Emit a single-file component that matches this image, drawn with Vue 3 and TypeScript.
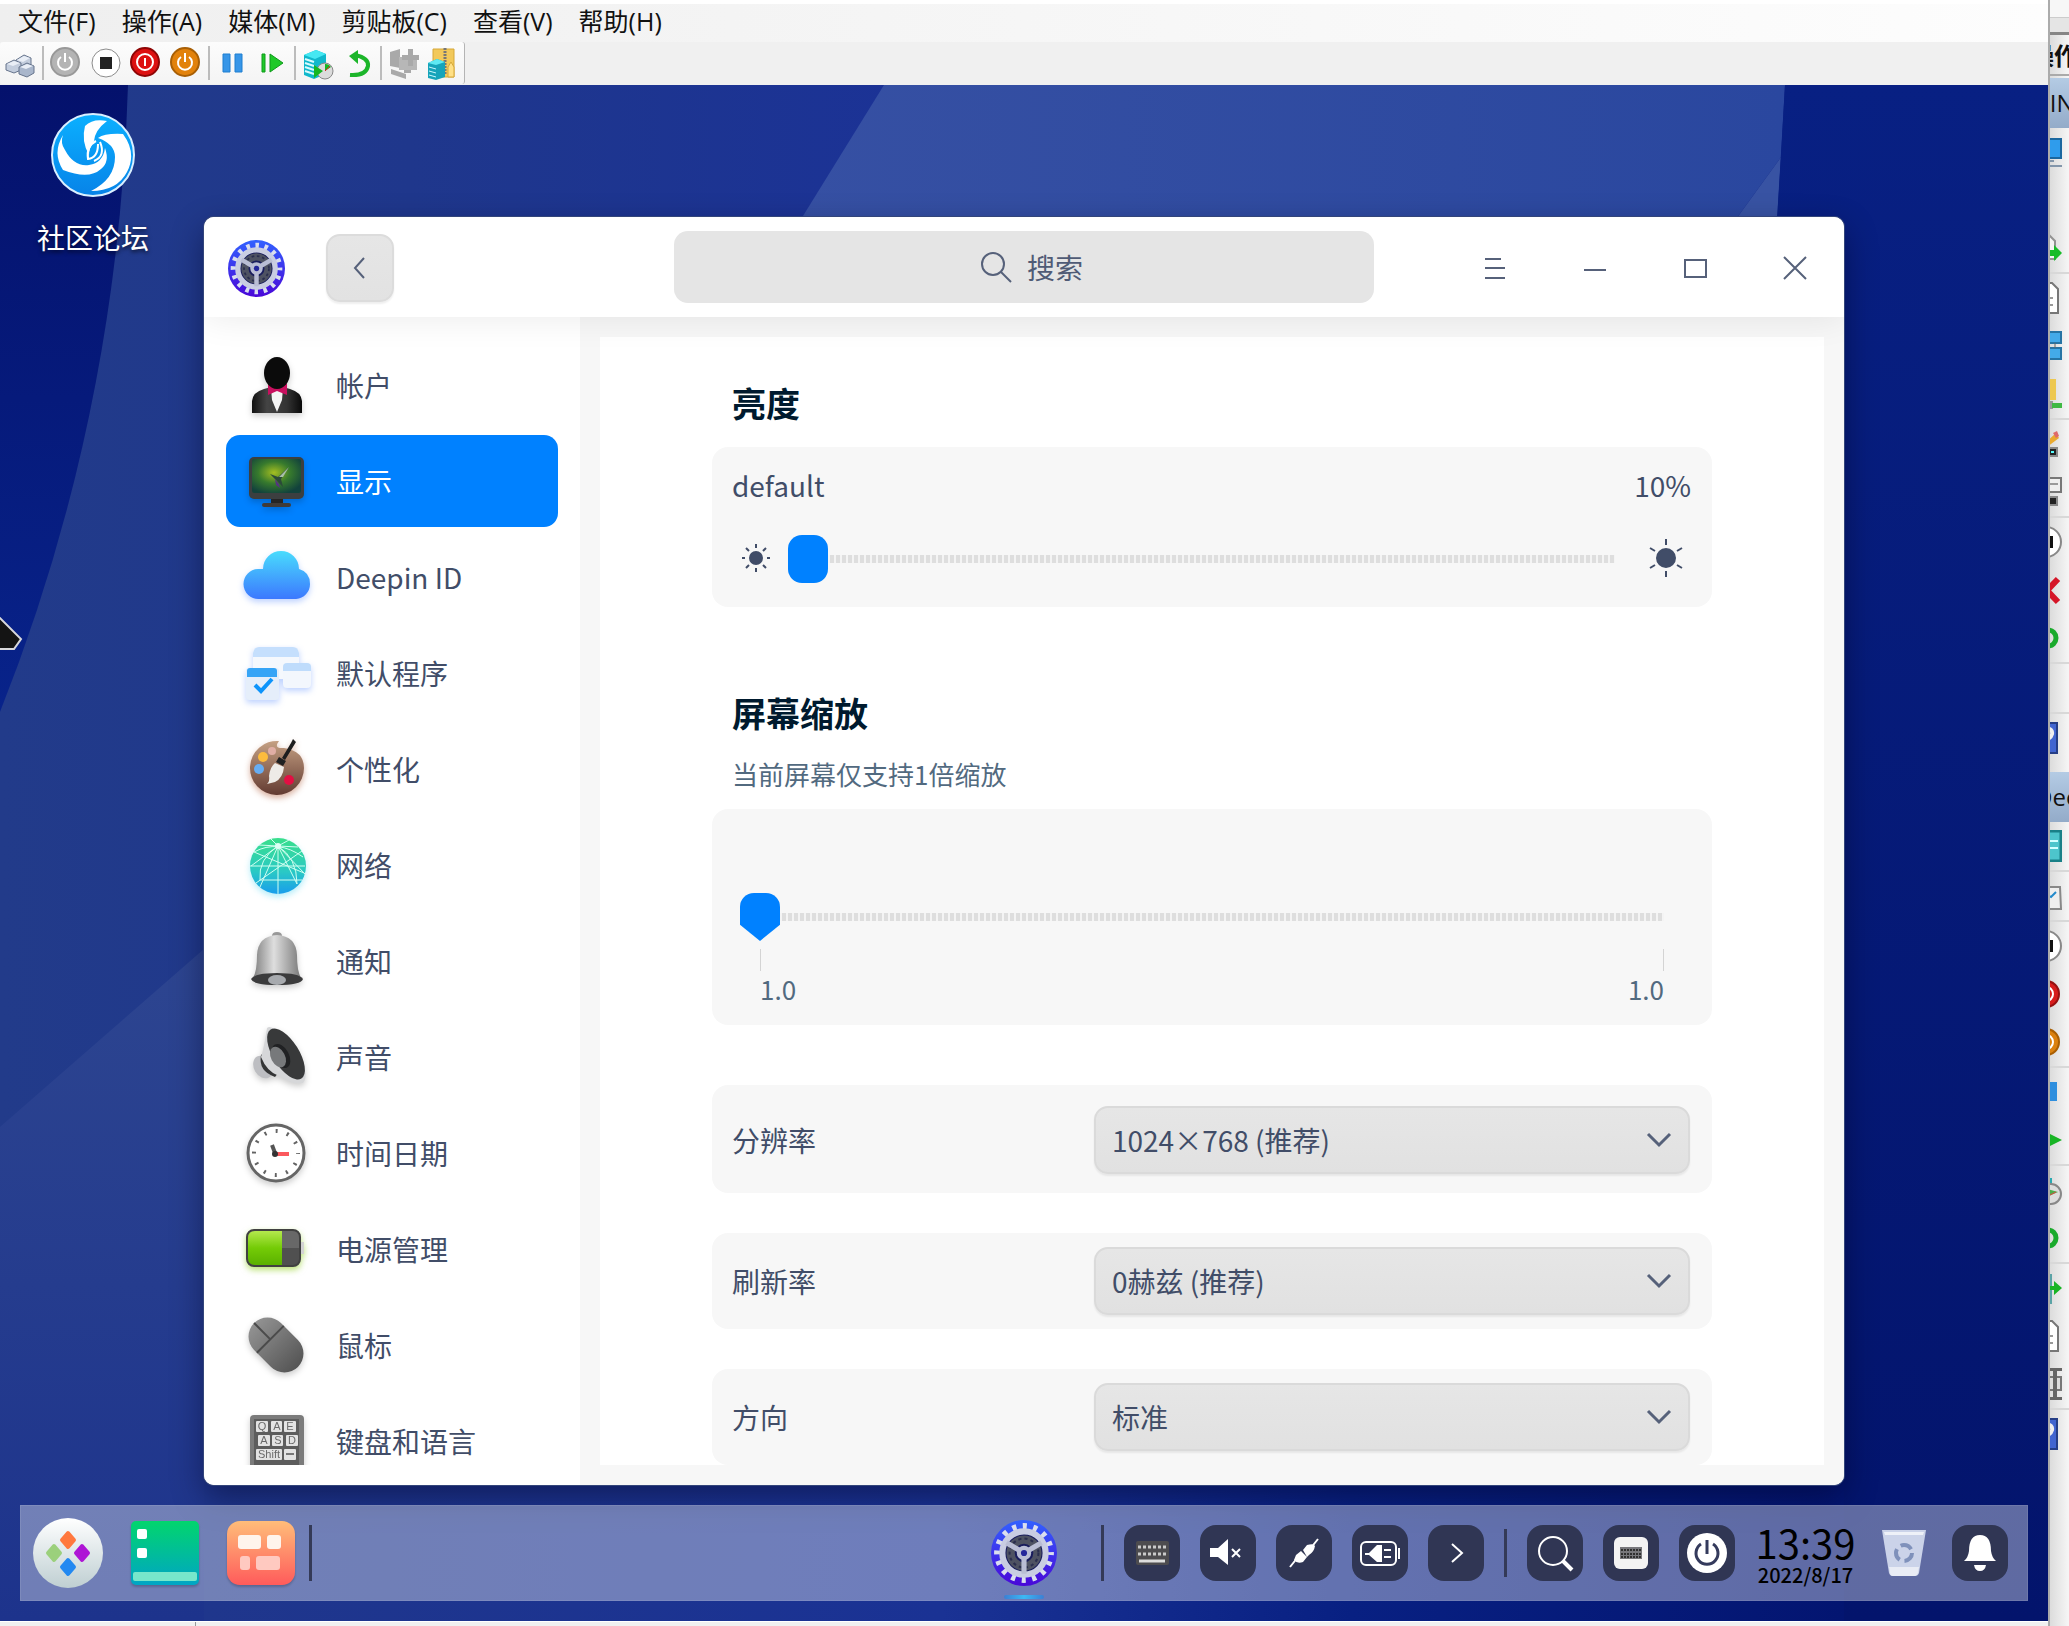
<script setup lang="ts">
import { ref } from 'vue'

interface NavItem { id: string; label: string; icon: string }
interface Option { id: string; label: string; choices: string[]; tall?: boolean }

const menus = ['文件(F)', '操作(A)', '媒体(M)', '剪贴板(C)', '查看(V)', '帮助(H)']

const toolGroups: { name: string; art: string }[][] = [
  [{
    name: '键盘',
    art: `<g stroke="#66748c" stroke-width="1" fill="#c3cddd"><path d="M16 17l8-5 7 3v7l-7 4-8-3z"/><path d="M6 21l8-4 7 3v7l-7 3-8-3z"/><path d="M19 24l8-4 7 3v7l-7 4-8-3z" fill="#a9b6cb"/></g><path d="M17 17l7-4 6 2-7 4zM7 21l7-3 6 2-7 3zM20 24l7-3 6 2-7 3z" fill="#e9eef6"/>`,
  }],
  [
    { name: '启动', art: `<circle cx="19" cy="19" r="14" fill="#b4b4b4" stroke="#989898" stroke-width="2"/><path d="M15 14a7 7 0 1 0 8 0M19 10v9" fill="none" stroke="#fff" stroke-width="2"/>` },
    { name: '停止', art: `<circle cx="20" cy="20" r="14" fill="#fff" stroke="#8c8c8c" stroke-width="1"/><rect x="14" y="14" width="12" height="12" fill="#222"/>` },
    { name: '关闭', art: `<circle cx="19" cy="19" r="14" fill="#dd1111" stroke="#8e0505" stroke-width="2"/><circle cx="19" cy="19" r="8" fill="none" stroke="#fff" stroke-width="2"/><path d="M19 15v8" stroke="#fff" stroke-width="2"/>` },
    { name: '保存', art: `<circle cx="19" cy="19" r="14" fill="#e2820b" stroke="#a85f05" stroke-width="2"/><path d="M15 14a7 7 0 1 0 8 0M19 10v9" fill="none" stroke="#fff" stroke-width="2"/>` },
  ],
  [
    { name: '暂停', art: `<path d="M11 11h7v18h-7zM23 11h7v18h-7z" fill="#3796e8" stroke="#1f7fd0"/>` },
    { name: '重置', art: `<path d="M10 11h3v18h-3zM18 11l13 9-13 9z" fill="#1fc929" stroke="#0f9a1a"/>` },
  ],
  [
    { name: '检查点', art: `<path d="M6 12l12-5 10 4v20l-12 5-10-4z" fill="#10b8cc"/><path d="M6 12l12-5 10 4-11 5z" fill="#45e8f2"/><path d="M7 16l9 3M7 20l9 3M7 24l9 3M7 28l9 3" stroke="#d8fbff" stroke-width="2"/><circle cx="27" cy="28" r="8" fill="#dcdcdc" stroke="#888"/><path d="M27 28v-7a7 7 0 0 1 6 3zM16 22l9 6-9 7z" fill="#16b722"/><path d="M27 28l5-5" stroke="#d22" stroke-width="1"/>` },
    { name: '还原', art: `<path d="M17 12q14 3 13 11-2 10-18 9" fill="none" stroke="#1cb52a" stroke-width="4"/><path d="M20 7v14l-9-8z" fill="#1cb52a"/>` },
  ],
  [
    { name: '增强会话', art: `<g fill="#a9a9a9"><path d="M6 9l10-3v19l-10-2z"/><path d="M15 14h18v13H15z" fill="#b7b7b7"/><path d="M24 6h5v6h6v5h-6v6h-5v-6h-6v-5h6z"/><path d="M20 27h7v3h-7zM7 26l15 5v5L7 31z"/></g>` },
    { name: '共享', art: `<path d="M9 6h21v28H9z" fill="#f2c95b" stroke="#d6a838"/><path d="M27 19l3 5v10h-6V24z" fill="#ffe086" stroke="#d6a838"/><path d="M21 5v26" stroke="#777" stroke-width="3" stroke-dasharray="2 1"/><path d="M4 20l9-4 8 3v15l-9 3-8-2z" fill="#16a4ba"/><path d="M4 20l9-4 8 3-9 3z" fill="#5ee9f3"/><path d="M5 24l7 2M5 28l7 2M5 32l7 2" stroke="#c8f8ff"/>` },
  ],
]

const nav: NavItem[] = [
  { id: 'account', label: '帐户', icon: `<path d="M11 64V52q1-9 12-12l7-2h12l7 2q11 3 12 12v12z" fill="url(#suit)"/><path d="M30 39h12l-1 12-5 12-5-12z" fill="#f4f4f4"/><path d="M27 34l9 5 10-5v12l-10-4-9 4z" fill="#c9105f"/><ellipse cx="36" cy="24" rx="13" ry="16" fill="#0b0b0b"/>` },
  { id: 'display', label: '显示', icon: `<path d="M30 53h12v6H30z" fill="#252525"/><rect x="21" y="58" width="29" height="4" rx="2" fill="#403b38"/><rect x="8" y="12" width="55" height="42" rx="5" fill="#3c3f40"/><rect x="11" y="14" width="49" height="34" rx="2" fill="url(#screen)"/><path d="M29 29l8 3 11-10-8 12 2 8-6-6z" fill="#2b4a39"/><path d="M38 32l10-10-6 10z" fill="#a9bfa6"/><path d="M34 34l4 5 1 4-4-3z" fill="#563480"/>` },
  { id: 'deepin-id', label: 'Deepin ID', icon: `<path d="M18 58a15 15 0 0 1-1-30h5a18 18 0 0 1 36 0q11 3 11 15a15 15 0 0 1-14 15z" fill="url(#cloud)"/>` },
  { id: 'default-apps', label: '默认程序', icon: `<rect x="12" y="10" width="46" height="32" rx="4" fill="#f5f8fd"/><path d="M12 20v-4q1-6 6-6h34q5 0 6 6v4z" fill="#c5dffd"/><rect x="42" y="26" width="28" height="25" rx="4" fill="#f3f7fd"/><path d="M42 34v-4q0-4 4-4h20q4 0 4 4v4z" fill="#bfdcfc"/><rect x="5" y="31" width="33" height="32" rx="3" fill="#e5eefa"/><path d="M6 40v-6q0-3 3-3h24q3 0 3 3v6z" fill="#36a4f6"/><path d="M14 48l6 6 11-12" fill="none" stroke="#0d94fb" stroke-width="4"/>` },
  { id: 'personalization', label: '个性化', icon: `<path d="M38 8q-6 8 5 7 20 3 20 20a27 27 0 1 1-25-27z" fill="url(#wood)"/><circle cx="22" cy="24" r="5" fill="#fdbc3d"/><circle cx="31" cy="18" r="4" fill="#e0aea5"/><circle cx="18" cy="36" r="5" fill="#67adf3"/><circle cx="48" cy="47" r="5" fill="#e30f43"/><path d="M41 25l9-15 2-4 3 3-11 18z" fill="#1c1d1e"/><path d="M35 29l3-5 7 4-3 5z" fill="#202122"/><path d="M34 30l9 4q-1 11-9 15l-8 2q3-3 2-8 1-9 6-13z" fill="#eeebe7"/>` },
  { id: 'network', label: '网络', icon: `<circle cx="37" cy="37" r="28" fill="url(#globe)"/><g fill="none" stroke="#cffff0" stroke-width="1"><path d="M37 17L19 58M37 17L56 55M37 17L10 37M37 17l27 28M37 17v48M9 37h55M13 23l50 21M61 22L15 54M37 17L18 16M37 17l20 1M19 51h42M30 10l7 7 11-6"/><path d="M37 17q19 12 19 38M37 17Q17 30 19 51M13 23q24-13 49 5"/></g><circle cx="37" cy="17" r="3" fill="#dffff6"/>` },
  { id: 'notification', label: '通知', icon: `<path d="M31 11q0-4 5-4t5 4v3H31z" fill="#989898"/><path d="M16 30q1-19 20-20 19 1 20 20 0 16 4 23 3 6-24 6T12 53q-3 6 0 0 4-7 4-23z" fill="url(#steel)"/><path d="M10 54q4-6 26-6t26 6q-2 6-26 6T10 54z" fill="#3b3b3c"/><ellipse cx="36" cy="55" rx="9" ry="5" fill="#a7aaae"/>` },
  { id: 'sound', label: '声音', icon: `<g transform="translate(0 2)"><ellipse cx="22" cy="44" rx="9" ry="12" transform="rotate(-30 22 44)" fill="#bdbec2"/><path d="M20 32q-3 16 14 22l4-5-12-22z" fill="#343536"/><path d="M26 5q-3 20-6 29 6 15 18 19 14 9 24 7 7-8-5-28T34 7q-5-5-8-2z" fill="#d6d7d9"/><ellipse cx="45" cy="31" rx="13" ry="29" transform="rotate(-32 45 31)" fill="#38393a"/><ellipse cx="40" cy="33" rx="8" ry="13" transform="rotate(-28 40 33)" fill="#202123"/><ellipse cx="37" cy="34" rx="7" ry="11" transform="rotate(-28 37 34)" fill="#77797b"/></g>` },
  { id: 'datetime', label: '时间日期', icon: `<circle cx="35" cy="36" r="28" fill="#fff" stroke="#656565" stroke-width="3"/><circle cx="35" cy="36" r="22" fill="none" stroke="#636363" stroke-width="4" stroke-dasharray="2 9.519" stroke-dashoffset="1"/><path d="M34 36l-3-8" stroke="#555" stroke-width="4"/><path d="M35 37h13" stroke="#fb595d" stroke-width="4"/><circle cx="34" cy="37" r="3" fill="#333"/>` },
  { id: 'power', label: '电源管理', icon: `<path d="M58 29h5v12h-5z" fill="#d3d3d3"/><rect x="6" y="17" width="53" height="36" rx="7" fill="#505050" stroke="#414141" stroke-width="2"/><path d="M41 18h10q7 0 7 7v10H41z" fill="#686868"/><path d="M14 18h27v34H14q-7 0-7-7V25q0-7 7-7z" fill="url(#charge)"/>` },
  { id: 'mouse', label: '鼠标', icon: `<g transform="rotate(-45 35 36)"><rect x="16" y="5" width="38" height="62" rx="19" fill="url(#grey)"/><path d="M16 28h38M35 5v23" stroke="#4b4b4b" stroke-width="2"/></g>` },
  { id: 'keyboard', label: '键盘和语言', icon: `<rect x="9" y="10" width="54" height="58" rx="4" fill="#7b7b7b"/><path d="M13 14h45v47H13z" fill="#5d5d5d"/><g fill="#e3e3e3"><rect x="15" y="16" width="12" height="11" rx="1"/><rect x="30" y="16" width="11" height="11" rx="1"/><rect x="43" y="16" width="12" height="11" rx="1"/><rect x="17" y="30" width="12" height="11" rx="1"/><rect x="31" y="30" width="11" height="11" rx="1"/><rect x="45" y="30" width="12" height="11" rx="1"/><rect x="15" y="44" width="26" height="11" rx="1"/><rect x="43" y="44" width="12" height="11" rx="1"/></g><g fill="#6a6a6a" font-family="Liberation Sans, sans-serif" font-size="11" text-anchor="middle"><text x="21" y="25">Q</text><text x="36" y="25">A</text><text x="49" y="25">E</text><text x="23" y="39">A</text><text x="37" y="39">S</text><text x="51" y="39">D</text><text x="28" y="53">Shift</text></g><path d="M45 49h8" stroke="#777" stroke-width="2"/>` },
]

const current = ref('display')
const brightness = ref(10)
const scale = ref(1)
const query = ref('')

const options: Option[] = [
  { id: 'resolution', label: '分辨率', choices: ['1024×768 (推荐)'], tall: true },
  { id: 'refresh', label: '刷新率', choices: ['0赫兹 (推荐)'] },
  { id: 'direction', label: '方向', choices: ['标准'] },
]

const tray: { name: string; art: string }[] = [
  { name: '键盘', art: `<rect x="12" y="16" width="33" height="24" rx="2" fill="#4d4c4f"/><path d="M14 22h29M14 29h29" stroke="#c9c9c9" stroke-width="3" stroke-dasharray="3 2"/><path d="M15 36h26" stroke="#ddd" stroke-width="3"/>` },
  { name: '静音', art: `<path d="M10 23h8l10-9v26l-10-8h-8z" fill="#fff"/><path d="M32 24l8 8M40 24l-8 8" stroke="#fff" stroke-width="2"/>` },
  { name: '网络', art: `<path d="M14 42l8-10M42 14l-8 10" stroke="#fff" stroke-width="2"/><path d="M20 30l5-4 6 6-4 5q-6 2-9-2zM27 25l4-5q7-2 8 1-1 6-6 9l-2 2z" fill="#fff"/>` },
  { name: '电源', art: `<rect x="9" y="17" width="35" height="23" rx="5" fill="none" stroke="#fff" stroke-width="2"/><path d="M47 23v11" stroke="#fff" stroke-width="2"/><path d="M13 28h4l8-8h5v17h-5l-8-7h-4z" fill="#fff"/><path d="M32 25h7M32 32h7" stroke="#fff" stroke-width="2"/>` },
  { name: '展开', art: `<path d="M24 19l10 9-10 9" fill="none" stroke="#fff" stroke-width="2"/>` },
]
const quick: { name: string; art: string }[] = [
  { name: '搜索', art: `<circle cx="26" cy="26" r="14" fill="none" stroke="#fff" stroke-width="2"/><path d="M36 36l9 9" stroke="#fff" stroke-width="4"/>` },
  { name: '屏幕键盘', art: `<rect x="11" y="12" width="34" height="32" rx="6" fill="#f3f3f3"/><path d="M17 22h22v12H17z" fill="#77777b"/><path d="M18 25h20M18 29h20M18 32h20" stroke="#303030" stroke-width="2" stroke-dasharray="2 1"/>` },
  { name: '关机', art: `<circle cx="28" cy="28" r="20" fill="#fff"/><path d="M22 19a11 11 0 1 0 12 0M28 15v14" fill="none" stroke="#343a5c" stroke-width="3"/>` },
]

const art: Record<string, string> = {
  none: '',
  monitor: `<path d="M0 3h31v19H0z" fill="#2f9cec" stroke="#1a679f" stroke-width="2"/><path d="M4 25h20M0 30h32" stroke="#8396ab" stroke-width="2"/>`,
  exportDoc: `<path d="M2 3h17l6 6v18H2z" fill="#f4f4f4" stroke="#929292" stroke-width="2"/><path d="M10 18h14v-5l8 8-8 8v-5H10z" fill="#17bc28"/>`,
  doc: `<path d="M4 1h18l6 6v24H4z" fill="#fff" stroke="#777" stroke-width="2"/><path d="M8 16h15M8 23h15" stroke="#999" stroke-width="2"/>`,
  screens: `<path d="M10 2h21v11H10zM10 18h21v11H10z" fill="#43aae9" stroke="#2674a4" stroke-width="2"/><path d="M25 13v5" stroke="#666"/>`,
  folder: `<path d="M2 1h24v21H2z" fill="#edc850"/><path d="M12 23h11v8H12z" fill="#999"/><path d="M22 25h10v5H22z" fill="#40b943"/>`,
  pencil: `<path d="M0 19h28v10H0z" fill="#888"/><path d="M3 21h23v6H3z" fill="#222"/><path d="M12 18L26 5l3 5-12 9z" fill="#e9aa30"/><path d="M23 5l4-2 2 5-3 2z" fill="#df6a6a"/><path d="M21 24h3" stroke="#5ff" stroke-width="2"/>`,
  printer: `<path d="M2 2h29v14H2z" fill="#eee" stroke="#777" stroke-width="2"/><path d="M8 8h20" stroke="#999" stroke-width="2"/><path d="M0 20h28v10H0z" fill="#888"/><path d="M3 22h23v6H3z" fill="#222"/>`,
  stop: `<circle cx="16" cy="16" r="15" fill="#fff" stroke="#888" stroke-width="2"/><path d="M10 10h13v12H10z" fill="#111"/>`,
  cross: `<path d="M6 5l22 23M28 5L6 28" stroke="#d51628" stroke-width="6"/>`,
  refresh: `<circle cx="18" cy="16" r="8" fill="none" stroke="#1aaa2c" stroke-width="5"/>`,
  help: `<path d="M0 1h27v30H0z" fill="#4165d0" stroke="#253e86" stroke-width="2"/><path d="M10 9q2-4 6-3 7 1 6 6-1 4-6 6v4" fill="none" stroke="#eee" stroke-width="4"/>`,
  server: `<path d="M1 1h30v30H1z" fill="#4dc5cc" stroke="#198087" stroke-width="3"/><path d="M4 11h24M4 18h24" stroke="#d2ffff" stroke-width="2"/>`,
  chart: `<path d="M6 7h24l1 22H6z" fill="#eee" stroke="#888" stroke-width="2"/><path d="M9 18l8-3 4 2 5-5" fill="none" stroke="#238acb" stroke-width="2"/>`,
  off: `<circle cx="16" cy="16" r="13" fill="#d71c1c" stroke="#951010" stroke-width="2"/><circle cx="16" cy="16" r="7" fill="none" stroke="#fff" stroke-width="2"/>`,
  save: `<circle cx="16" cy="16" r="13" fill="#db810f" stroke="#a85e02" stroke-width="2"/><circle cx="16" cy="16" r="7" fill="none" stroke="#fff" stroke-width="2"/>`,
  pause: `<path d="M4 6h8v19H4zM17 6h10v19H17z" fill="#2e8ede"/>`,
  play: `<path d="M12 6l20 10-20 10z" fill="#18b425"/>`,
  snapshot: `<path d="M1 4h21v22H1z" fill="#2aa9b1"/><circle cx="21" cy="20" r="10" fill="#ddd" stroke="#888" stroke-width="2"/><path d="M10 13l18 5-9 4z" fill="#4bae4b"/><path d="M20 21l6-3" stroke="#d44"/>`,
  move: `<path d="M0 2h22v30H0z" fill="#5ba3a6"/><path d="M16 14h8V9l8 7-8 7v-5h-8z" fill="#18b425"/>`,
  rename: `<path d="M0 9h31v13H0z" fill="#ddd" stroke="#777" stroke-width="2"/><path d="M18 1h14M18 31h14M25 1v30" stroke="#666" stroke-width="4"/>`,
}
const hostActions = [['monitor', 'none', 'exportDoc'], ['doc', 'screens', 'folder'], ['pencil', 'printer'], ['stop', 'cross', 'refresh'], ['none'], ['help']]
const guestActions = [['server'], ['chart'], ['stop', 'off', 'save'], ['pause', 'play'], ['snapshot', 'refresh'], ['move', 'doc', 'rename'], ['help']]
</script>

<template>
  <div class="screen">
    <svg class="defs" aria-hidden="true">
      <defs>
        <linearGradient id="suit"><stop offset="0" stop-color="#111" /><stop offset=".3" stop-color="#444" /><stop offset=".7" stop-color="#333" /><stop offset="1" stop-color="#090909" /></linearGradient>
        <radialGradient id="screen" cx=".45" cy=".4" r=".65"><stop offset="0" stop-color="#a4be21" /><stop offset=".5" stop-color="#377a2d" /><stop offset="1" stop-color="#12423c" /></radialGradient>
        <linearGradient id="cloud" x2="0" y2="1"><stop offset="0" stop-color="#49dcfd" /><stop offset="1" stop-color="#3c78fe" /></linearGradient>
        <linearGradient id="wood" x2="0" y2="1"><stop offset="0" stop-color="#c5a083" /><stop offset="1" stop-color="#633b32" /></linearGradient>
        <linearGradient id="globe" x2="0" y2="1"><stop offset="0" stop-color="#39df8b" /><stop offset=".6" stop-color="#2ac9c5" /><stop offset="1" stop-color="#199dec" /></linearGradient>
        <linearGradient id="steel"><stop offset="0" stop-color="#777" /><stop offset=".45" stop-color="#dedede" /><stop offset="1" stop-color="#777" /></linearGradient>
        <linearGradient id="charge" x2="0" y2="1"><stop offset="0" stop-color="#b4e94e" /><stop offset=".5" stop-color="#74cb06" /><stop offset="1" stop-color="#5bb100" /></linearGradient>
        <linearGradient id="grey" x2="0" y2="1"><stop offset="0" stop-color="#929292" /><stop offset="1" stop-color="#555" /></linearGradient>
        <linearGradient id="gearBlue" x2="0" y2="1"><stop offset="0" stop-color="#3261ff" /><stop offset="1" stop-color="#4907d8" /></linearGradient>
        <linearGradient id="teal" x2="0" y2="1"><stop offset="0" stop-color="#02d56d" /><stop offset="1" stop-color="#00a5c5" /></linearGradient>
        <linearGradient id="coral" x2="0" y2="1"><stop offset="0" stop-color="#ffbd79" /><stop offset="1" stop-color="#ff5b5b" /></linearGradient>
        <linearGradient id="pearl" x2="0" y2="1"><stop offset="0" stop-color="#fff" /><stop offset="1" stop-color="#bfcfd2" /></linearGradient>
        <linearGradient id="swirl" x2="0" y2="1"><stop offset="0" stop-color="#0bb0ff" /><stop offset="1" stop-color="#0783e8" /></linearGradient>
        <symbol id="gear" viewBox="0 0 64 64">
          <circle cx="32" cy="32" r="32" fill="url(#gearBlue)" />
          <circle cx="32" cy="32" r="26" fill="none" stroke="#dadeef" stroke-width="6" stroke-dasharray="4 6.21" stroke-dashoffset="2" />
          <circle cx="32" cy="32" r="21" fill="#191d5c" stroke="#c9cde2" stroke-width="6" />
          <circle cx="32" cy="32" r="13" fill="none" stroke="#4e5262" stroke-width="8" />
          <circle cx="32" cy="32" r="14" fill="none" stroke="#2a2e4e" stroke-width="2" stroke-dasharray="3 3" />
          <path d="M32 32v20M32 32L15 22M32 32l17-10" stroke="#b9bdd4" stroke-width="5" />
          <circle cx="32" cy="32" r="7" fill="#b9bdd4" /><circle cx="32" cy="32" r="3" fill="#24269a" />
        </symbol>
      </defs>
    </svg>

    <section class="vm">
      <nav class="menubar" aria-label="菜单">
        <button v-for="m in menus" :key="m" type="button">{{ m }}</button>
      </nav>
      <div class="toolrow">
        <div class="toolbar">
          <div v-for="(group, g) in toolGroups" :key="g" class="tools">
            <button v-for="t in group" :key="t.name" type="button" :aria-label="t.name">
              <svg viewBox="0 0 40 40" v-html="t.art"></svg>
            </button>
          </div>
        </div>
      </div>

      <div class="desktop">
        <svg class="wallpaper" viewBox="0 0 2048 1536" preserveAspectRatio="none" aria-hidden="true">
          <defs>
            <linearGradient id="base" x2="1" y2="0"><stop offset="0" stop-color="#223b8a" /><stop offset=".2" stop-color="#1f378c" /><stop offset=".45" stop-color="#1b3296" /><stop offset=".8" stop-color="#0a2086" /><stop offset="1" stop-color="#061b7c" /></linearGradient>
            <linearGradient id="edge" x2="0" y2="1"><stop offset="0" stop-color="#04116c" /><stop offset="1" stop-color="#08238a" /></linearGradient>
            <linearGradient id="beam"><stop offset="0" stop-color="#3650a3" /><stop offset="1" stop-color="#2a479f" /></linearGradient>
            <linearGradient id="floor" x2="1" y2="0"><stop offset="0" stop-color="#1f368c" /><stop offset=".45" stop-color="#1a3294" /><stop offset=".7" stop-color="#082082" /><stop offset="1" stop-color="#031571" /></linearGradient>
            <linearGradient id="right" x2="0" y2="1"><stop offset="0" stop-color="#082083" /><stop offset="1" stop-color="#03146c" /></linearGradient>
            <linearGradient id="hill" x2="0" y2="1"><stop offset="0" stop-color="#2d4590" /><stop offset="1" stop-color="#1d338c" /></linearGradient>
          </defs>
          <path d="M0 0h2048v1536H0z" fill="url(#base)" />
          <path d="M0 0h128q-10 330-128 627z" fill="url(#edge)" />
          <path d="M884 0h901l-4 72-58 80H790z" fill="url(#beam)" />
          <path d="M1781 72l-5 80h-53z" fill="#3853a3" />
          <path d="M1785 0h263v1536h-288l16-1384z" fill="url(#right)" />
          <path d="M0 1042l204-178v672H0z" fill="url(#hill)" />
          <path d="M204 1390h1640v146H204z" fill="url(#floor)" />
        </svg>
        <svg class="pointer" viewBox="0 0 24 36" aria-hidden="true"><path d="M-12 4L0 2l21 21-7 10H-4z" fill="#141414" stroke="#d8d8dc" stroke-width="2" /></svg>
        <a class="shortcut" href="#forum">
          <svg viewBox="0 0 84 84">
            <circle cx="42" cy="42" r="41" fill="url(#swirl)" stroke="#d9efff" stroke-width="2" />
            <path d="M34 13q8-8 22-5-12 9-13 20-5 7-5 14-8-14-4-29z" fill="#fff" />
            <path d="M12 22q-3 8 2 15 9 17 24 15 14-2 16-17 5 14-4 21-12 11-38 1Q1 40 12 22z" fill="#fff" />
            <path d="M47 25q7-5 25-4 14 19 4 38-10 19-36 19 24-12 24-34 0-13-17-19z" fill="#fff" />
            <path d="M45 28q-10 5-8 18 10-1 10-15M49 29q6 14-6 19" fill="none" stroke="#fff" stroke-width="2" />
          </svg>
          <span>社区论坛</span>
        </a>

        <main class="window">
          <header class="titlebar">
            <div class="lead">
              <svg class="logo"><use href="#gear" /></svg>
              <button class="back" type="button" aria-label="返回"><svg viewBox="0 0 28 28"><path d="M18 4L9 14l9 10" /></svg></button>
            </div>
            <label class="search">
              <svg viewBox="0 0 32 32"><circle cx="13" cy="13" r="11" /><path d="M21 21l10 10" /></svg>
              <input v-model="query" type="text" placeholder="搜索" aria-label="搜索" />
            </label>
            <div class="winctl">
              <button type="button" aria-label="菜单"><svg viewBox="0 0 28 28"><path d="M5 5h16M5 14h20M5 24h20" /></svg></button>
              <button type="button" aria-label="最小化"><svg viewBox="0 0 28 28"><path d="M4 16h22" /></svg></button>
              <button type="button" aria-label="最大化"><svg viewBox="0 0 28 28"><path d="M5 6h21v17H5z" /></svg></button>
              <button type="button" aria-label="关闭"><svg viewBox="0 0 28 28"><path d="M4 3l22 22M26 3L4 25" /></svg></button>
            </div>
          </header>

          <div class="body">
            <nav class="sidebar" aria-label="设置">
              <div class="navlist">
                <button v-for="n in nav" :key="n.id" type="button" :class="['item', { active: n.id === current }]" @click="current = n.id">
                  <svg :class="['art', n.id]" viewBox="0 0 72 72" v-html="n.icon"></svg>
                  <span>{{ n.label }}</span>
                </button>
              </div>
            </nav>

            <div class="frame">
              <div class="page">
                <h2>亮度</h2>
                <div class="card bright">
                  <div class="caption"><label for="bright">default</label><output for="bright">{{ brightness }}%</output></div>
                  <div class="slide">
                    <svg viewBox="0 0 48 48"><circle cx="24" cy="23" r="6" /><path d="M24 9v4M24 33v4M10 23h3M35 23h3M14 13l3 3M31 30l3 3M34 13l-3 3M14 33l3-3" /></svg>
                    <input id="bright" v-model.number="brightness" type="range" min="10" max="100" />
                    <svg class="far" viewBox="0 0 48 48"><circle cx="23" cy="23" r="9" /><path d="M23 4v6M23 36v6M7 13l5 3M34 30l5 3M39 13l-5 3M7 33l5-3" /></svg>
                  </div>
                </div>

                <h2 class="second">屏幕缩放</h2>
                <p>当前屏幕仅支持1倍缩放</p>
                <div class="card zoom">
                  <input v-model.number="scale" class="pointed" type="range" min="1" max="2" aria-label="屏幕缩放" />
                  <div class="ticks"><span>1.0</span><span>1.0</span></div>
                </div>

                <div class="rows">
                  <div v-for="o in options" :key="o.id" :class="['card', 'row', { tall: o.tall }]">
                    <label :for="o.id">{{ o.label }}</label>
                    <div class="pick">
                      <select :id="o.id"><option v-for="c in o.choices" :key="c">{{ c }}</option></select>
                      <svg viewBox="0 0 28 28"><path d="M3 8l11 11L25 8" /></svg>
                    </div>
                  </div>
                </div>
              </div>
            </div>
          </div>
        </main>

        <footer class="dock">
          <div class="apps">
            <button type="button" aria-label="启动器"><svg class="launcher" viewBox="0 0 70 70"><circle cx="35" cy="35" r="35" fill="url(#pearl)" /><g stroke-width="4" stroke-linejoin="round"><path d="M35 15l6 7-6 7-6-7z" fill="#ff783e" stroke="#ff783e" /><path d="M49 28l6 7-6 7-6-7z" fill="#ae15d5" stroke="#ae15d5" /><path d="M35 42l6 7-6 7-6-7z" fill="#2389f1" stroke="#2389f1" /><path d="M21 28l6 7-6 7-6-7z" fill="#9bd07c" stroke="#9bd07c" /></g></svg></button>
            <button type="button" aria-label="显示桌面"><svg class="tile" viewBox="0 0 68 64"><rect width="68" height="64" rx="5" fill="url(#teal)" /><rect x="6" y="8" width="10" height="10" rx="2" fill="#fff" /><rect x="6" y="27" width="10" height="10" rx="2" fill="#fff" /><rect x="2" y="51" width="64" height="9" rx="2" fill="#77e7cb" /></svg></button>
            <button type="button" aria-label="多任务视图"><svg class="tile" viewBox="0 0 68 64"><rect width="68" height="64" rx="13" fill="url(#coral)" /><rect x="11" y="14" width="23" height="14" rx="3" fill="#fff4ec" /><rect x="40" y="14" width="14" height="14" rx="3" fill="#fff4ec" /><rect x="13" y="35" width="10" height="14" rx="3" fill="#ffc9c0" /><rect x="29" y="35" width="24" height="14" rx="3" fill="#ffc9c0" /></svg></button>
            <i class="bar"></i>
          </div>
          <button class="running" type="button" aria-label="控制中心"><svg><use href="#gear" /></svg></button>
          <div class="tray">
            <i class="bar"></i>
            <button v-for="t in tray" :key="t.name" class="chip" type="button" :aria-label="t.name"><svg viewBox="0 0 56 56" v-html="t.art"></svg></button>
            <i class="bar short"></i>
            <button v-for="t in quick" :key="t.name" class="chip" type="button" :aria-label="t.name"><svg viewBox="0 0 56 56" v-html="t.art"></svg></button>
            <time class="clock" datetime="2022-08-17T13:39"><b>13:39</b><span>2022/8/17</span></time>
            <button class="trash" type="button" aria-label="回收站"><svg viewBox="0 0 44 48"><path d="M0 1h44l-7 43q-1 3-4 3H11q-3 0-4-3z" fill="#cbd3e9" /><path d="M2 3h40l-1 3H3z" fill="#eef1f8" /><path d="M7 38h30l-1 6q-1 3-3 3H11q-3 0-3-3z" fill="#e9ecf5" /><circle cx="22" cy="24" r="8" fill="none" stroke="#7f91bb" stroke-width="4" stroke-dasharray="12 5" /></svg></button>
            <button class="chip" type="button" aria-label="通知"><svg viewBox="0 0 56 56"><path d="M12 36q4-3 5-10 0-16 11-16t11 16q1 7 5 10zM22 40h12q-1 6-6 6t-6-6z" fill="#fff" /></svg></button>
          </div>
        </footer>
      </div>
      <div class="statusbar"><i></i></div>
    </section>

    <aside class="manager">
      <div class="actions">
        <div class="blank"></div>
        <div class="head">操作</div>
        <div class="host">KINGS</div>
        <div v-for="(set, i) in hostActions" :key="'h' + i" class="set">
          <div v-for="(a, j) in set" :key="j" class="act"><svg viewBox="0 0 32 32" v-html="art[a]"></svg></div>
        </div>
        <div class="host guest">Deepin</div>
        <div v-for="(set, i) in guestActions" :key="'g' + i" class="set">
          <div v-for="(a, j) in set" :key="j" class="act"><svg viewBox="0 0 32 32" v-html="art[a]"></svg></div>
        </div>
      </div>
    </aside>
  </div>
</template>

<style>
body { margin: 0; overflow: hidden; }
</style>

<style scoped>
.screen { display: flex; height: 100vh; overflow: hidden; background: #f0f0f0; color: #414d68; font-family: "Noto Sans CJK SC", "Noto Sans", sans-serif; font-size: 28px; }
.screen * { box-sizing: border-box; }
.defs { position: absolute; width: 0; height: 0; }
button { padding: 0; border: 0; background: none; font: inherit; color: inherit; }
button svg { display: block; }
.vm { flex: 1; min-width: 0; display: flex; flex-direction: column; }

.menubar { display: flex; gap: 26px; height: 42px; padding: 0 18px 4px; border-top: 4px solid #fff; background: linear-gradient(90deg, #efefef, #fdfdfd); color: #111; font-family: "Open Sans", "Noto Sans CJK SC", sans-serif; font-size: 25px; line-height: 34px; white-space: nowrap; }
.toolrow { height: 43px; background: #f0f0f0; }
.toolbar { display: flex; width: max-content; height: 42px; background: linear-gradient(#fcfcfc, #f4f4f4); border-right: 1px solid #b4b4b4; border-radius: 3px; }
.tools { display: flex; align-items: center; }
.tools + .tools::before { content: ""; width: 2px; height: 34px; margin: 0 2px; background: #bcbcbc; }
.tools svg { width: 40px; height: 40px; }

.desktop { position: relative; flex: 1; min-height: 0; display: flex; flex-direction: column; padding: 132px 20px 20px; overflow: hidden; }
.wallpaper { position: absolute; inset: 0; width: 100%; height: 100%; }
.pointer { position: absolute; left: 0; top: 531px; width: 24px; height: 36px; }
.shortcut { position: absolute; left: 33px; top: 28px; width: 120px; display: flex; flex-direction: column; align-items: center; gap: 20px; color: #fff; line-height: 40px; text-decoration: none; text-shadow: 0 2px 4px #000a; }
.shortcut svg { width: 84px; height: 84px; }

.window { position: relative; flex: 1; min-height: 0; display: flex; flex-direction: column; margin: 0 184px 20px; border-radius: 10px; overflow: hidden; background: #fff; box-shadow: 0 0 0 1px #33457a, 0 12px 32px rgba(0, 0, 30, .45); }
.titlebar { position: relative; z-index: 1; flex: none; display: grid; grid-template-columns: 1fr 700px 1fr; align-items: center; height: 100px; background: #fff; box-shadow: 0 0 36px rgba(0, 0, 0, .09); }
.lead { display: flex; align-items: center; gap: 41px; padding: 2px 0 0 24px; }
.logo { width: 57px; height: 57px; }
.back { display: grid; place-items: center; width: 68px; height: 68px; border: 2px solid #dcdcdc; border-radius: 14px; background: linear-gradient(#e6e6e6, #e2e2e2); box-shadow: 0 2px 2px #0001; }
.back svg { width: 28px; height: 28px; }
.back svg, .search svg, .winctl svg, .pick svg { fill: none; stroke: #56617a; stroke-width: 2; }
.search { display: flex; align-items: center; justify-content: center; gap: 15px; height: 72px; padding-left: 17px; border-radius: 14px; background: #e5e5e5; }
.search svg { width: 32px; height: 32px; }
.search input { width: 58px; padding: 0; border: 0; outline: 0; background: none; color: #414d68; font: inherit; }
.search input::placeholder { color: #505b75; opacity: 1; }
.winctl { display: flex; justify-content: flex-end; padding-top: 2px; }
.winctl button { display: grid; place-items: center; width: 100px; height: 96px; }
.winctl svg { width: 28px; height: 28px; }

.body { flex: 1; min-height: 0; display: flex; }
.sidebar { flex: none; width: 376px; padding: 0 22px 20px; background: #fff; }
.navlist { display: flex; flex-direction: column; gap: 4px; height: 100%; padding-top: 22px; overflow: hidden; }
.item { flex: none; display: flex; align-items: center; gap: 23px; height: 92px; padding-left: 15px; border-radius: 14px; text-align: left; }
.item.active { background: #0081ff; color: #fff; }
.art { width: 72px; height: 72px; filter: drop-shadow(0 3px 3px #0003); }
.art.deepin-id, .art.default-apps { filter: drop-shadow(0 3px 3px #3c78fe55); }
.art.personalization { filter: drop-shadow(0 3px 3px #a03a1066); }
.art.network { filter: drop-shadow(0 3px 3px #21c8ee55); }
.art.power { filter: drop-shadow(0 3px 3px #80c80088); }

.frame { flex: 1; min-width: 0; padding: 20px; background: #f7f7f7; }
.page { height: 100%; padding: 42px 112px 0; overflow: hidden; background: #fff; }
h2 { margin: 0 0 20px; padding-left: 20px; color: #001a2e; font-size: 34px; font-weight: 700; line-height: 48px; }
h2.second { margin: 82px 0 17px; }
p { margin: 0 0 15px; padding-left: 20px; color: #526a7f; font-size: 26px; line-height: 40px; }
.card { border-radius: 16px; background: #f7f7f7; }
.bright { padding: 18px 21px 24px 20px; }
.caption { display: flex; justify-content: space-between; line-height: 40px; }
.slide { display: flex; align-items: center; margin-top: 30px; }
.slide svg { flex: none; width: 48px; height: 48px; margin-right: 8px; fill: #414d68; stroke: #414d68; stroke-width: 2; }
.slide .far { margin: 0 0 0 28px; }
input[type=range] { flex: 1; display: block; width: 100%; height: 48px; margin: 0; appearance: none; background: none; }
input[type=range]::-webkit-slider-runnable-track { height: 8px; background: repeating-linear-gradient(90deg, #dedede 0 4px, #f4f4f4 4px 6px); }
input[type=range]::-webkit-slider-thumb { appearance: none; width: 40px; height: 48px; margin-top: -20px; border-radius: 14px; background: #0081ff; }
input.pointed::-webkit-slider-thumb { border-radius: 14px 14px 0 0; clip-path: polygon(0 0, 100% 0, 100% 66%, 50% 100%, 0 66%); }
.zoom { padding: 84px 48px 18px 28px; }
.ticks { display: flex; justify-content: space-between; margin: 8px 0 0 20px; color: #526a7f; font-size: 26px; line-height: 36px; }
.ticks span::before { content: ""; display: block; width: 1px; height: 22px; background: #d4d4d4; }
.ticks span:last-child::before { margin-left: auto; }
.rows { display: flex; flex-direction: column; gap: 40px; margin-top: 60px; }
.row { display: flex; align-items: center; justify-content: space-between; height: 96px; padding: 0 22px 0 20px; }
.row.tall { height: 108px; padding-top: 2px; }
.row label { line-height: 40px; }
.pick { position: relative; width: calc(100% - 362px); }
.pick select { display: block; width: 100%; height: 68px; padding: 0 60px 0 16px; appearance: none; border: 2px solid #dadada; border-radius: 14px; background: linear-gradient(#e6e6e6, #e1e1e1); box-shadow: 0 2px 2px #0001; color: #414d68; font: inherit; }
.pick svg { position: absolute; right: 17px; top: 20px; width: 28px; height: 28px; stroke-width: 3; pointer-events: none; }

.dock { position: relative; flex: none; display: grid; grid-template-columns: 1fr auto 1fr; align-items: center; height: 96px; padding: 0 20px 0 13px; background: rgba(255, 255, 255, .37); box-shadow: inset 0 0 0 1px #ffffff18; }
.apps { display: flex; align-items: center; gap: 28px; }
.launcher { width: 70px; height: 70px; }
.tile { width: 68px; height: 64px; filter: drop-shadow(0 2px 1px #0003); }
.bar { width: 3px; height: 56px; background: #343a57; }
.apps .bar { margin-left: -14px; }
.bar.short { height: 48px; }
.running { position: relative; width: 66px; height: 66px; margin-left: 7px; }
.running svg { width: 66px; height: 66px; }
.running::after { content: ""; position: absolute; left: 13px; bottom: -13px; width: 40px; height: 4px; border-radius: 2px; background: linear-gradient(90deg, #3c7fd4, #3cb8f4, #3c7fd4); }
.tray { display: flex; align-items: center; justify-content: flex-end; gap: 20px; }
.chip { width: 56px; height: 56px; border-radius: 16px; background: #303654; }
.chip svg { width: 56px; height: 56px; }
.clock { display: flex; flex-direction: column; align-items: center; width: 101px; padding-top: 4px; color: #000; white-space: nowrap; }
.clock b { font-size: 40px; font-weight: 400; line-height: 40px; }
.clock span { font-size: 20px; font-weight: 500; line-height: 26px; }
.trash { margin: 0 6px; }
.trash svg { width: 44px; height: 48px; }
.statusbar { height: 5px; border-top: 1px solid #fff; background: #f0f0f0; }
.statusbar i { display: block; width: 1px; height: 4px; margin-left: 195px; background: #999; }

.manager { flex: none; width: 21px; overflow: hidden; border-left: 2px solid #ababab; background: linear-gradient(90deg, #dcdcdc, #f6f6f6); color: #111; }
.actions { width: 240px; margin-left: -20px; }
.blank { height: 35px; border-bottom: 3px solid #868686; background: linear-gradient(#f7f7f7 0 17px, #ccc 17px 18px, #e5e5e5 18px); }
.head { height: 41px; border-bottom: 2px solid #aaa; font-size: 24px; font-weight: 700; line-height: 40px; }
.host { height: 50px; margin-top: 2px; padding-left: 5px; background: linear-gradient(#b4cbe4, #93abc9); font-family: "Open Sans", sans-serif; font-size: 24px; line-height: 50px; }
.guest { margin-top: 10px; }
.set + .set { border-top: 2px solid #d8d8d8; }
.act { display: flex; align-items: center; height: 48px; }
.act svg { width: 32px; height: 32px; }
</style>
